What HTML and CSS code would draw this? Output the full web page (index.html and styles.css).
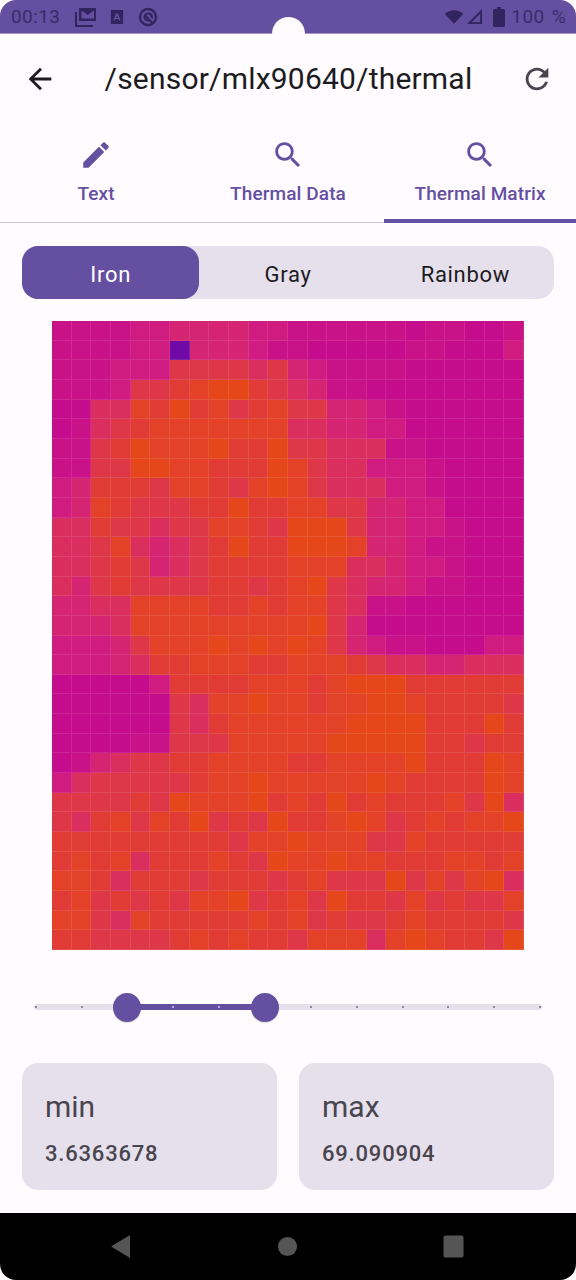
FILE: index.html
```html
<!DOCTYPE html>
<html lang="en">

<head>
    <meta charset="UTF-8">
    <meta name="viewport" content="width=device-width, initial-scale=1.0">
    <title>Thermal Matrix</title>
    <link rel="stylesheet" href="styles.css">
</head>

<body>
    <div class="screen">
        <div class="statusbar">
            <div class="status-left">
                <span class="status-text">00:13</span>
                <svg class="status-photos" viewBox="0 0 24 24"><path d="M6 3h17v13H6zM8.500 13.500h12.500v-8l-6.200 4.500-6.300-4.500z" fill-rule="evenodd"/><path d="M2 7h2v13h16v2H2z"/></svg>
                <svg class="status-a" viewBox="0 0 16 18"><path d="M1 1h14v16H1zM6.800 5l-2.800 8h1.800l.5-1.700h3.400l.5 1.700H12L9.200 5zM8 7.200l1.200 2.800H6.800z" fill-rule="evenodd"/></svg>
                <svg class="status-dnd" viewBox="0 0 24 24"><path d="M12 2a10 10 0 1 0 0 20 10 10 0 0 0 0-20zm0 2.500a7.500 7.500 0 1 1 0 15 7.500 7.500 0 0 1 0-15z"/><path d="M12 7a5 5 0 1 0 3 9l-1.500-1.800A2.700 2.700 0 1 1 14.700 12L17 14a5 5 0 0 0-5-7z"/><path d="M9 9l9 9-1.500 1.500-9-9z"/></svg>
            </div>
            <div class="status-right">
                <svg class="status-wifi" viewBox="0 0 24 18"><path d="M12 17L1 5.500C4 2.500 8 1 12 1s8 1.500 11 4.500z"/></svg>
                <svg class="status-signal" viewBox="0 0 18 18"><path d="M17 1v16H1zM15 6L6 15h9z" fill-rule="evenodd"/></svg>
                <svg class="status-battery" viewBox="0 0 12 20"><path d="M4 0h4v2h2.500A1.500 1.500 0 0 1 12 3.500V18.500A1.500 1.500 0 0 1 10.500 20h-9A1.500 1.500 0 0 1 0 18.500V3.500A1.500 1.500 0 0 1 1.500 2H4z"/></svg>
                <span class="status-text status-battery-text">100 %</span>
            </div>
        </div>
        <div class="camera"></div>

        <div class="topbar">
            <svg class="icon icon-dark" viewBox="0 0 24 24"><path d="M20 11H7.830l5.590-5.590L12 4l-8 8 8 8 1.410-1.410L7.830 13H20v-2z"/></svg>
            <h1>/sensor/mlx90640/thermal</h1>
            <svg class="icon icon-gray" viewBox="0 0 24 24"><path d="M17.650 6.350C16.200 4.900 14.210 4 12 4c-4.420 0-7.990 3.580-7.990 8s3.570 8 7.990 8c3.730 0 6.840-2.550 7.730-6h-2.080c-.82 2.330-3.040 4-5.650 4-3.310 0-6-2.690-6-6s2.690-6 6-6c1.660 0 3.140.69 4.220 1.780L13 11h7V4l-2.350 2.350z"/></svg>
        </div>

        <div class="tabs">
            <div class="tab">
                <svg class="icon" viewBox="0 0 24 24"><path d="M3 17.250V21h3.750L17.810 9.940l-3.750-3.750L3 17.250zM20.710 7.040c.39-.39.39-1.020 0-1.410l-2.340-2.340c-.39-.39-1.020-.39-1.410 0l-1.830 1.830 3.750 3.750 1.830-1.830z"/></svg>
                <span>Text</span>
            </div>
            <div class="tab">
                <svg class="icon" viewBox="0 0 24 24"><path d="M15.500 14h-.79l-.28-.27C15.410 12.590 16 11.110 16 9.500 16 5.910 13.090 3 9.500 3S3 5.910 3 9.500 5.910 16 9.500 16c1.610 0 3.090-.59 4.230-1.570l.27.28v.79l5 4.990L20.490 19l-4.990-5zm-6 0C7.010 14 5 11.990 5 9.500S7.010 5 9.500 5 14 7.010 14 9.500 11.990 14 9.500 14z"/></svg>
                <span>Thermal Data</span>
            </div>
            <div class="tab active">
                <svg class="icon" viewBox="0 0 24 24"><path d="M15.500 14h-.79l-.28-.27C15.410 12.590 16 11.110 16 9.500 16 5.910 13.090 3 9.500 3S3 5.910 3 9.500 5.910 16 9.500 16c1.610 0 3.090-.59 4.230-1.570l.27.28v.79l5 4.990L20.490 19l-4.990-5zm-6 0C7.010 14 5 11.990 5 9.500S7.010 5 9.500 5 14 7.010 14 9.500 11.990 14 9.500 14z"/></svg>
                <span>Thermal Matrix</span>
            </div>
        </div>

        <div class="segments">
            <div class="segment selected">Iron</div>
            <div class="segment">Gray</div>
            <div class="segment">Rainbow</div>
        </div>

        <div id="matrix" class="matrix"></div>

        <div class="slider">
            <div class="track"></div>
            <div class="track-active"></div>
            <div id="ticks" class="ticks"></div>
            <div class="thumb thumb-min"></div>
            <div class="thumb thumb-max"></div>
        </div>

        <div class="cards">
            <div class="card">
                <div class="card-title">min</div>
                <div class="card-value">3.6363678</div>
            </div>
            <div class="card">
                <div class="card-title">max</div>
                <div class="card-value">69.090904</div>
            </div>
        </div>

        <div class="navbar">
            <svg class="nav-icon" viewBox="0 0 22 26"><path d="M21 1v24L1 13z"/></svg>
            <svg class="nav-icon" viewBox="0 0 22 22"><circle cx="11" cy="11" r="10"/></svg>
            <svg class="nav-icon" viewBox="0 0 22 24"><rect x="0.500" y="0.500" width="21" height="23" rx="2"/></svg>
        </div>
    </div>
    <script src="script.js"></script>
</body>

</html>
```

FILE: styles.css
```css
* {
    box-sizing: border-box;
}

body {
    margin: 0;
    background-color: #fff;
    font-family: Roboto, "Noto Sans", sans-serif;
}

.screen {
    position: relative;
    display: flex;
    flex-direction: column;
    width: 576px;
    height: 1280px;
    overflow: hidden;
    background-color: #fffbfe;
}

/* status bar */
.statusbar {
    display: flex;
    justify-content: space-between;
    align-items: center;
    height: 34px;
    padding: 0 10px 0 11px;
    background-color: #654fa1;
    border-radius: 16px 16px 0 0;
    border-bottom: 1px solid #a898c8;
    color: #3a2c6a;
}

.status-left,
.status-right {
    display: flex;
    align-items: center;
}

.status-text {
    font-size: 19px;
    letter-spacing: 0.4px;
}

.status-battery-text {
    word-spacing: 2px;
}

.statusbar svg {
    fill: #32245f;
}

.status-photos {
    width: 24px;
    height: 24px;
    margin-left: 13px;
}

.status-a {
    width: 14px;
    height: 16px;
    margin-left: 13px;
}

.status-dnd {
    width: 22px;
    height: 22px;
    margin-left: 13px;
}

.status-wifi {
    width: 20px;
    height: 16px;
}

.status-signal {
    width: 17px;
    height: 17px;
    margin-left: 2px;
}

.status-battery {
    width: 12px;
    height: 20px;
    margin: 0 6px 0 10px;
}

.camera {
    position: absolute;
    top: 17px;
    left: 272px;
    width: 33px;
    height: 33px;
    border-radius: 50%;
    background-color: #fffbfe;
}

/* top app bar */
.topbar {
    display: flex;
    justify-content: space-between;
    align-items: center;
    height: 86px;
    padding: 3px 22px 0 23px;
}

.topbar h1 {
    margin: 0;
    font-size: 30px;
    font-weight: 400;
    letter-spacing: 0.2px;
    color: #1c1b1f;
}

.icon {
    width: 34px;
    height: 34px;
    fill: #654fa1;
}

.icon-dark {
    fill: #1c1b1f;
}

.icon-gray {
    fill: #49454f;
}

/* tabs */
.tabs {
    display: flex;
    height: 103px;
    border-bottom: 1px solid #cac4d0;
}

.tab {
    position: relative;
    flex: 1;
    display: flex;
    flex-direction: column;
    align-items: center;
    padding-top: 18px;
    color: #654fa1;
    font-size: 19px;
    font-weight: 500;
    letter-spacing: 0.1px;
}

.tab span {
    margin-top: 10px;
}

.tab.active::after {
    content: "";
    position: absolute;
    left: 0;
    right: 0;
    bottom: -1px;
    height: 4px;
    background-color: #654fa1;
}

/* color map selector */
.segments {
    display: flex;
    height: 53px;
    margin: 23px 22px 0;
    border-radius: 16px;
    background-color: #e6e0ec;
}

.segment {
    flex: 1;
    display: flex;
    justify-content: center;
    align-items: center;
    padding-top: 3px;
    border-radius: 16px;
    font-size: 22px;
    letter-spacing: 0.7px;
    color: #1c1b1f;
}

.segment.selected {
    background-color: #654fa1;
    color: #fff;
}

/* heat map */
.matrix {
    display: grid;
    grid-template-columns: repeat(24, 1fr);
    grid-template-rows: repeat(32, 1fr);
    width: 472px;
    height: 629px;
    margin: 22px auto 0;
}

.cell {
    border-right: 1px solid rgba(255, 255, 255, 0.1);
    border-bottom: 1px solid rgba(255, 255, 255, 0.1);
}

.level-0 { background-color: #c40c8c; }
.level-1 { background-color: #ca1288; }
.level-2 { background-color: #d01b80; }
.level-3 { background-color: #d42472; }
.level-4 { background-color: #d92e5e; }
.level-5 { background-color: #dd3748; }
.level-6 { background-color: #e03c35; }
.level-7 { background-color: #e34228; }
.level-8 { background-color: #e5471a; }
.level-P { background-color: #6f0aa6; }

/* range slider */
.slider {
    position: relative;
    height: 30px;
    margin: 42px 34px 0;
}

.track {
    position: absolute;
    top: 12px;
    left: 0;
    right: 0;
    height: 6px;
    border-radius: 3px;
    background-color: #e6e0ec;
}

.track-active {
    position: absolute;
    top: 12px;
    left: 93px;
    width: 138px;
    height: 6px;
    background-color: #654fa1;
}

.ticks {
    position: absolute;
    top: 14px;
    left: 1px;
    right: 1px;
    display: flex;
    justify-content: space-between;
}

.tick {
    width: 2px;
    height: 2px;
    background-color: #8f8a98;
}

.tick.on {
    background-color: #b9addb;
}

.thumb {
    position: absolute;
    top: 1px;
    width: 28px;
    height: 29px;
    border-radius: 50%;
    background-color: #654fa1;
    box-shadow: 0 1px 1px rgba(0, 0, 0, 0.15);
}

.thumb-min {
    left: 79px;
}

.thumb-max {
    left: 217px;
}

/* min / max cards */
.cards {
    display: flex;
    gap: 22px;
    margin: 41px 22px 0;
}

.card {
    flex: 1;
    height: 127px;
    padding: 25px 23px 0;
    border-radius: 16px;
    background-color: #e6e0ec;
    color: #49454f;
}

.card-title {
    font-size: 30px;
    line-height: 38px;
}

.card-value {
    margin-top: 15px;
    font-size: 22px;
    font-weight: 500;
    letter-spacing: 0.8px;
}

/* nav bar */
.navbar {
    display: flex;
    justify-content: space-between;
    align-items: center;
    height: 67px;
    margin-top: auto;
    padding: 0 112px 0 110px;
    background-color: #000;
    border-radius: 0 0 16px 16px;
}

.nav-icon {
    fill: #555;
}

.nav-icon:nth-child(1) {
    width: 21px;
    height: 25px;
}

.nav-icon:nth-child(2) {
    width: 21px;
    height: 21px;
}

.nav-icon:nth-child(3) {
    width: 21px;
    height: 23px;
}
```

FILE: script.js
```js
// one string per sensor row, each digit is a heat level, P is the cold spot
const rows = [
    "111122333322111111011001",
    "111122P33321100000110002",
    "111222555545321111000000",
    "111255678865431100000000",
    "004476867567553321000000",
    "014567777777443322000000",
    "115687778668554441100000",
    "115588776668754422210000",
    "236665776578754442210000",
    "237655566866775533220000",
    "446554557765888533221000",
    "445743456866888733211000",
    "445653456666777443221000",
    "435655556656785433211000",
    "334477776676775411000000",
    "333477777777785300000000",
    "222357778787875321100022",
    "222346677766777654433444",
    "000002666677767888666666",
    "000000547787767788766665",
    "000000546777777888866686",
    "000011555777778888866566",
    "013455667777667777866687",
    "245555567787777787666687",
    "555565877786768676667584",
    "546757685658667875676778",
    "666666666577877755766666",
    "676746667658778776667767",
    "776466656665675558575784",
    "675656577856758665756557",
    "775476666676756556766665",
    "665555676766577747876658"
];

const matrix = document.getElementById("matrix");

rows.forEach(row => {
    for (const level of row) {
        const cell = document.createElement("div");
        cell.className = "cell level-" + level;
        matrix.appendChild(cell);
    }
});

// twelve stops on the slider, the two between the thumbs are lit
const ticks = document.getElementById("ticks");

for (let i = 0; i < 12; i++) {
    const tick = document.createElement("div");
    tick.className = i > 2 && i < 5 ? "tick on" : "tick";
    ticks.appendChild(tick);
}
```
